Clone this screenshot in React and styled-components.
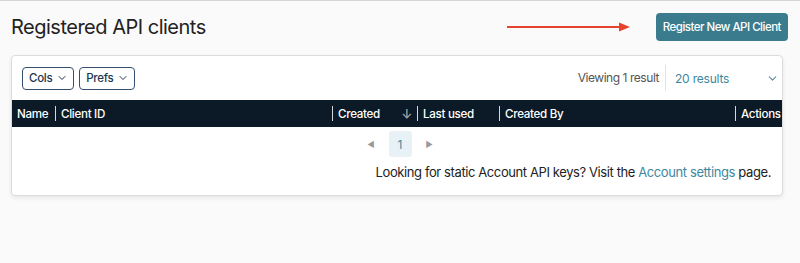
import React from "react";
import styled, { createGlobalStyle } from "styled-components";
import { FiChevronDown } from "react-icons/fi";

const GlobalStyle = createGlobalStyle`
  html, body {
    margin: 0;
    padding: 0;
    background: #fafafa;
  }
  body {
    font-family: Inter, "Liberation Sans", sans-serif;
    color: #1f1f1f;
  }
`;

const columns = [
  { label: "Name", width: 43 },
  { label: "Client ID", width: 277, sep: true },
  { label: "Created", width: 85, sep: true, sort: true },
  { label: "Last used", width: 82, sep: true },
  { label: "Created By", width: 236, sep: true },
  { label: "Actions", width: null, sep: true },
];

const App = () => {
  return (
    <Page>
      <GlobalStyle />
      <TopBar>
        <Title>Registered API clients</Title>
        <RightGroup>
          <Arrow width="124" height="10" viewBox="0 0 124 10">
            <line x1="0" y1="5" x2="114" y2="5" stroke="#e5432e" strokeWidth="2" />
            <path d="M112 0.5 L123 5 L112 9.5 Z" fill="#e5432e" />
          </Arrow>
          <PrimaryButton>Register New API Client</PrimaryButton>
        </RightGroup>
      </TopBar>

      <Card>
        <Toolbar>
          <ButtonGroup>
            <OutlineButton>
              Cols <FiChevronDown />
            </OutlineButton>
            <OutlineButton>
              Prefs <FiChevronDown />
            </OutlineButton>
          </ButtonGroup>
          <ResultsInfo>
            <Viewing>Viewing 1 result</Viewing>
            <PageSize>
              <span>20 results</span>
              <FiChevronDown />
            </PageSize>
          </ResultsInfo>
        </Toolbar>

        <HeaderRow>
          {columns.map((c) => (
            <HeaderCell key={c.label} $width={c.width} $sep={c.sep}>
              <span>{c.label}</span>
              {c.sort && <SortArrow>↓</SortArrow>}
            </HeaderCell>
          ))}
        </HeaderRow>

        <Pager>
          <PagerArrow>◀</PagerArrow>
          <PageNumber>1</PageNumber>
          <PagerArrow>▶</PagerArrow>
        </Pager>

        <Note>
          Looking for static Account API keys? Visit the{" "}
          <NoteLink href="#">Account settings</NoteLink> page.
        </Note>
      </Card>
    </Page>
  );
};

const Page = styled.div`
  min-height: 263px;
  box-sizing: border-box;
  border-top: 1px solid #d6d6d6;
  padding: 12px 12px 0 11px;
`;

const TopBar = styled.div`
  display: flex;
  align-items: center;
  justify-content: space-between;
  height: 28px;
`;

const Title = styled.h1`
  margin: 0;
  font-size: 20px;
  font-weight: 400;
  color: #222;
  letter-spacing: -0.5px;
`;

const RightGroup = styled.div`
  display: flex;
  align-items: center;
  gap: 25px;
`;

const Arrow = styled.svg`
  display: block;
`;

const PrimaryButton = styled.button`
  height: 28px;
  padding: 0 7px;
  border: none;
  border-radius: 4px;
  background: #3a7b8d;
  color: #fff;
  font-family: inherit;
  font-size: 11.5px;
  font-weight: 500;
  letter-spacing: -0.5px;
  cursor: pointer;
`;

const Card = styled.div`
  margin: 14px 5px 0 0;
  background: #fff;
  border: 1px solid #dcdcdc;
  border-radius: 4px;
  box-shadow: 0 2px 4px rgba(0, 0, 0, 0.08);
  padding-bottom: 15px;
`;

const Toolbar = styled.div`
  display: flex;
  align-items: center;
  justify-content: space-between;
  height: 44px;
  padding: 0 3px 0 10px;
`;

const ButtonGroup = styled.div`
  display: flex;
  gap: 5px;
`;

const OutlineButton = styled.button`
  display: flex;
  align-items: center;
  gap: 4px;
  height: 23px;
  padding: 0 5px 0 6px;
  border: 1px solid #35506e;
  border-radius: 4px;
  background: #fff;
  color: #1d3550;
  font-family: inherit;
  font-size: 11.5px;
  font-weight: 500;
  letter-spacing: -0.3px;

  svg {
    font-size: 12px;
  }
`;

const ResultsInfo = styled.div`
  display: flex;
  align-items: center;
  height: 26px;
`;

const Viewing = styled.span`
  font-size: 12px;
  letter-spacing: -0.45px;
  color: #555;
  padding-right: 6px;
  border-right: 1px solid #e2e2e2;
  line-height: 26px;
`;

const PageSize = styled.div`
  display: flex;
  align-items: center;
  justify-content: space-between;
  width: 104px;
  padding-left: 9px;
  color: #3e87a0;
  font-size: 12px;
  letter-spacing: -0.2px;

  svg {
    font-size: 13px;
    color: #5a8fa3;
  }
`;

const HeaderRow = styled.div`
  display: flex;
  align-items: center;
  height: 27px;
  background: #0b1a26;
  color: #fff;
  font-size: 11.6px;
  font-weight: 500;
  letter-spacing: -0.3px;
`;

const HeaderCell = styled.div`
  display: flex;
  align-items: center;
  justify-content: space-between;
  box-sizing: border-box;
  flex: ${(p) => (p.$width ? `0 0 ${p.$width}px` : "1 1 auto")};
  min-width: 0;
  height: 15px;
  padding: 0 5px;
  white-space: nowrap;
  border-left: ${(p) => (p.$sep ? "1px solid #d8d8d8" : "none")};
`;

const SortArrow = styled.span`
  color: #aaa;
  font-size: 13px;
`;

const Pager = styled.div`
  display: flex;
  align-items: center;
  justify-content: center;
  gap: 10px;
  margin-top: 4px;
  padding-left: 6px;
`;

const PagerArrow = styled.span`
  color: #999;
  font-size: 8px;
  padding: 0 4px;
`;

const PageNumber = styled.span`
  display: flex;
  align-items: center;
  justify-content: center;
  width: 23px;
  height: 26px;
  border-radius: 3px;
  background: #e8f2f6;
  color: #3e87a0;
  font-size: 12px;
`;

const Note = styled.p`
  margin: 7px 11px 0 0;
  text-align: right;
  font-size: 13px;
  letter-spacing: -0.4px;
  color: #222;
`;

const NoteLink = styled.a`
  color: #3e87a0;
  text-decoration: none;
`;

export default App;
